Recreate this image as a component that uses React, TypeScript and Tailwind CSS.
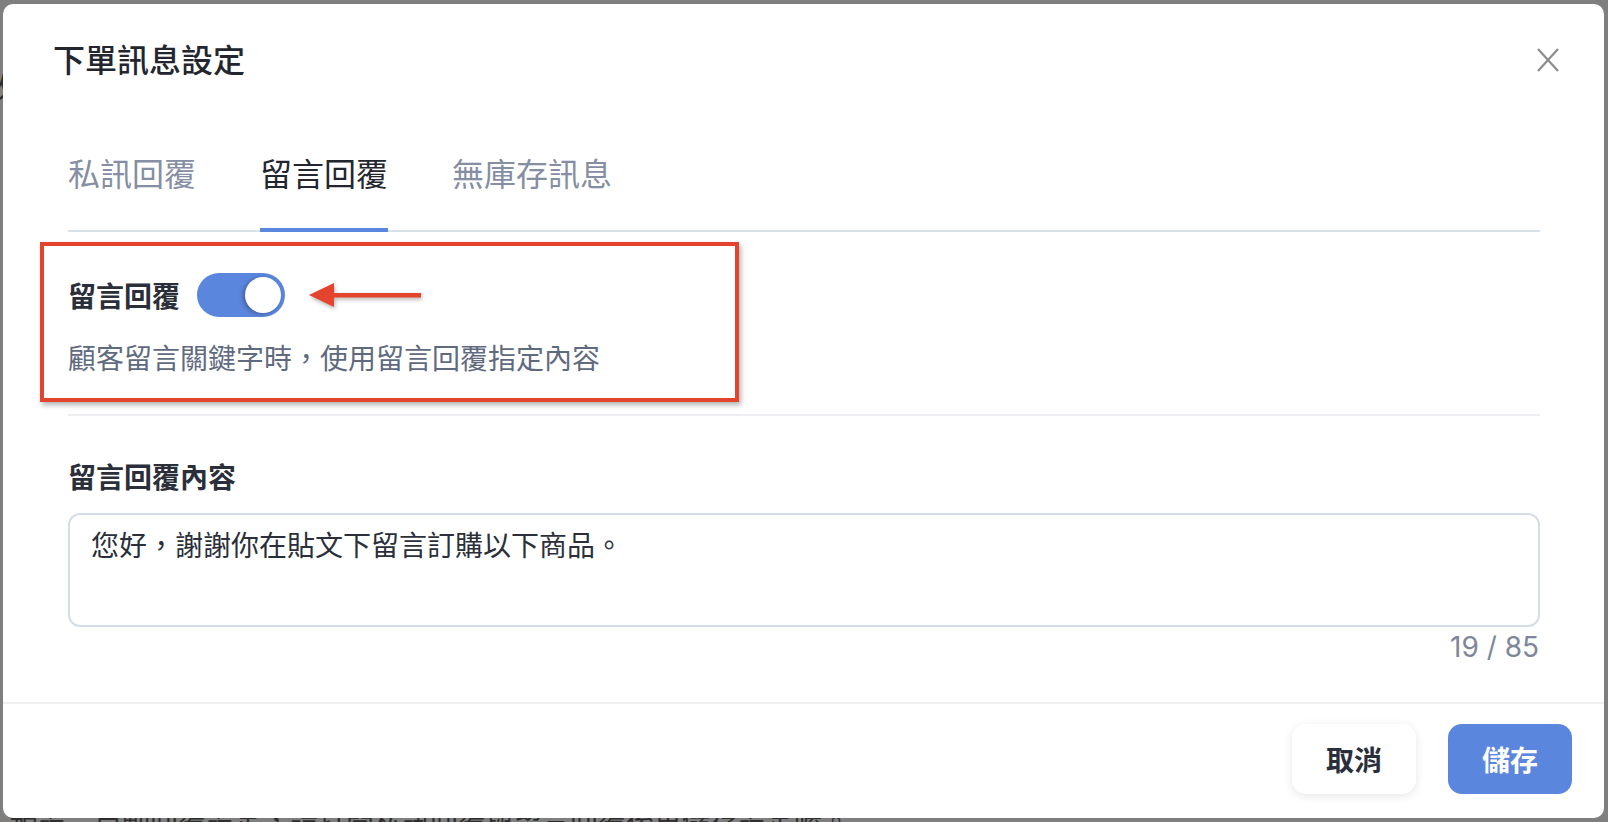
import React from "react";

const CJK = '"Noto Sans CJK TC", "Noto Sans", sans-serif';

export default function App() {
  return (
    <div
      className="relative w-[1608px] h-[822px] overflow-hidden bg-[#7f7f7f]"
      style={{ fontFamily: CJK }}
    >
      {/* page behind overlay */}
      <div className="absolute left-[-14px] top-[66px] text-[28px] leading-[40px] text-[#2e2e2e]">改</div>
      <div className="absolute left-[10px] top-[800px] text-[28px] leading-[40px] text-[#2e2e2e] whitespace-nowrap">
        預設：自動回覆設定，請打開私訊回覆與留言回覆後再儲存設定喔。
      </div>

      {/* modal */}
      <div className="absolute left-[3px] top-[4px] w-[1601px] h-[814px] bg-white rounded-[10px] flex flex-col">
        {/* header */}
        <div className="relative pl-[50px] pt-[30px]">
          <h1 className="text-[32px] leading-[48px] font-medium text-[#23262f]">下單訊息設定</h1>
          <button className="absolute right-[45px] top-[44px] w-[22px] h-[24px] text-[#8c8c8c]">
            <svg width="22" height="24" viewBox="0 0 22 24" fill="none" stroke="currentColor" strokeWidth="2.2">
              <line x1="1" y1="1" x2="21" y2="23" />
              <line x1="21" y1="1" x2="1" y2="23" />
            </svg>
          </button>
        </div>

        {/* tabs */}
        <div className="mx-[65px] mr-[64px] mt-[66px] flex gap-[64px] border-b-2 border-[#d8e0e8]">
          <div className="pb-[32px] -mb-[2px] text-[32px] leading-[48px] text-[#858ea2] border-b-4 border-transparent">私訊回覆</div>
          <div className="pb-[32px] -mb-[2px] text-[32px] leading-[48px] text-[#23262f] border-b-4 border-[#5b86de]">留言回覆</div>
          <div className="pb-[32px] -mb-[2px] text-[32px] leading-[48px] text-[#858ea2] border-b-4 border-transparent">無庫存訊息</div>
        </div>

        {/* body */}
        <div className="mx-[65px] mr-[64px]">
          <div className="relative pt-[41px] pb-[37px]">
            {/* annotation box */}
            <div className="absolute left-[-28px] top-[10px] w-[699px] h-[160px] border-[4px] border-[#e4432d] shadow-[2px_3px_5px_rgba(0,0,0,0.3)] pointer-events-none" />
            <div className="flex items-center h-[44px]">
              <span className="text-[28px] leading-[44px] font-bold text-[#2b2f3a]">留言回覆</span>
              <div className="ml-[17px] w-[88px] h-[44px] rounded-full bg-[#5b86de] flex items-center justify-end pr-[4px]">
                <div className="w-[36px] h-[36px] rounded-full bg-white shadow-[-2px_1px_4px_rgba(0,0,0,0.3)]" />
              </div>
              <svg className="ml-[24px]" width="114" height="30" viewBox="0 0 114 30" style={{ filter: "drop-shadow(1px 2px 2px rgba(0,0,0,0.3))" }}>
                <polygon points="0,15 25,3 25,27" fill="#e4432d" />
                <rect x="22" y="13" width="90" height="4.5" fill="#e4432d" />
              </svg>
            </div>
            <p className="mt-[20px] text-[28px] leading-[40px] text-[#5f6a7f]">顧客留言關鍵字時，使用留言回覆指定內容</p>
          </div>
          <div className="h-[2px] bg-[#eceef1]" />

          <div className="pt-[40px]">
            <div className="text-[28px] leading-[40px] font-bold text-[#2b2f3a]">留言回覆內容</div>
            <div className="mt-[17px] h-[114px] rounded-[12px] border-2 border-[#d5dde6] pl-[21px] pt-[9px] text-[28px] leading-[40px] text-[#2b2f3a]">
              您好，謝謝你在貼文下留言訂購以下商品。
            </div>
            <div
              className="text-right text-[28px] leading-[40px] text-[#7e879a] pr-[1px]"
              style={{ fontFamily: 'Inter, "Liberation Sans", sans-serif' }}
            >
              19 / 85
            </div>
          </div>
        </div>

        <div className="mt-[35px] h-[2px] bg-[#f0f0f0]" />

        {/* footer */}
        <div className="flex justify-end gap-[32px] pt-[20px] pr-[32px]">
          <button className="w-[124px] h-[70px] rounded-[14px] bg-white shadow-[0_2px_10px_rgba(0,0,0,0.1)] text-[28px] font-bold text-[#2b2f3a]">
            取消
          </button>
          <button className="w-[124px] h-[70px] rounded-[14px] bg-[#5b86de] text-[28px] font-bold text-white">
            儲存
          </button>
        </div>
      </div>
    </div>
  );
}
